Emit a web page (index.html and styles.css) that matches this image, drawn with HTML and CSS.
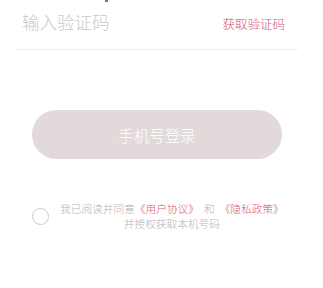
FILE: index.html
```html
<!DOCTYPE html>
<html lang="zh-CN">
<head>
<meta charset="utf-8">
<title>登录</title>
<link rel="stylesheet" href="styles.css">
</head>
<body>
<div class="page">
  <span class="caret-mark"></span>
  <div class="field">
    <span class="placeholder">输入验证码</span>
    <span class="get-code">获取验证码</span>
  </div>
  <div class="login-btn">手机号登录</div>
  <div class="agree">
    <span class="radio"></span>
    <p class="agree-text">我已阅读并同意<span class="link">《用户协议》</span><span class="and">和</span><span class="link">《隐私政策》</span><br>并授权获取本机号码</p>
  </div>
</div>
</body>
</html>
```
FILE: styles.css
```css
html, body {
  margin: 0;
  padding: 0;
  background: #ffffff;
}
body {
  font-family: "Noto Sans CJK SC", "Noto Sans", sans-serif;
  font-weight: 300;
}
.page {
  position: relative;
  width: 323px;
  height: 288px;
  overflow: hidden;
}
.caret-mark {
  position: absolute;
  left: 105px;
  top: 0;
  width: 3px;
  height: 2px;
  background: #4a78c8;
}
.field {
  margin: 0 25px 0 16px;
  height: 43px;
  padding: 0 13px 6px 6px;
  border-bottom: 1px solid #efefef;
  display: flex;
  align-items: center;
  justify-content: space-between;
}
.placeholder {
  font-size: 17.5px;
  color: #c8c8c8;
  line-height: 1;
}
.get-code {
  font-size: 12.5px;
  color: #d4546e;
  line-height: 1;
  margin-top: 6px;
}
.login-btn {
  margin: 60px 0 0 32px;
  width: 250px;
  height: 49px;
  border-radius: 25px;
  background: #e2d9db;
  color: #ffffff;
  font-size: 15.5px;
  display: flex;
  align-items: center;
  justify-content: center;
}
.agree {
  margin: 42px 0 0 32px;
  display: flex;
  align-items: center;
}
.radio {
  width: 15px;
  height: 15px;
  border: 1px solid #cccccc;
  border-radius: 50%;
  flex-shrink: 0;
}
.agree-text {
  margin: 0 0 0 11px;
  font-size: 10.7px;
  line-height: 15px;
  color: #b4b4b4;
  text-align: center;
}
.link {
  color: #d65a7a;
}
.and {
  padding: 0 5px;
}
```
